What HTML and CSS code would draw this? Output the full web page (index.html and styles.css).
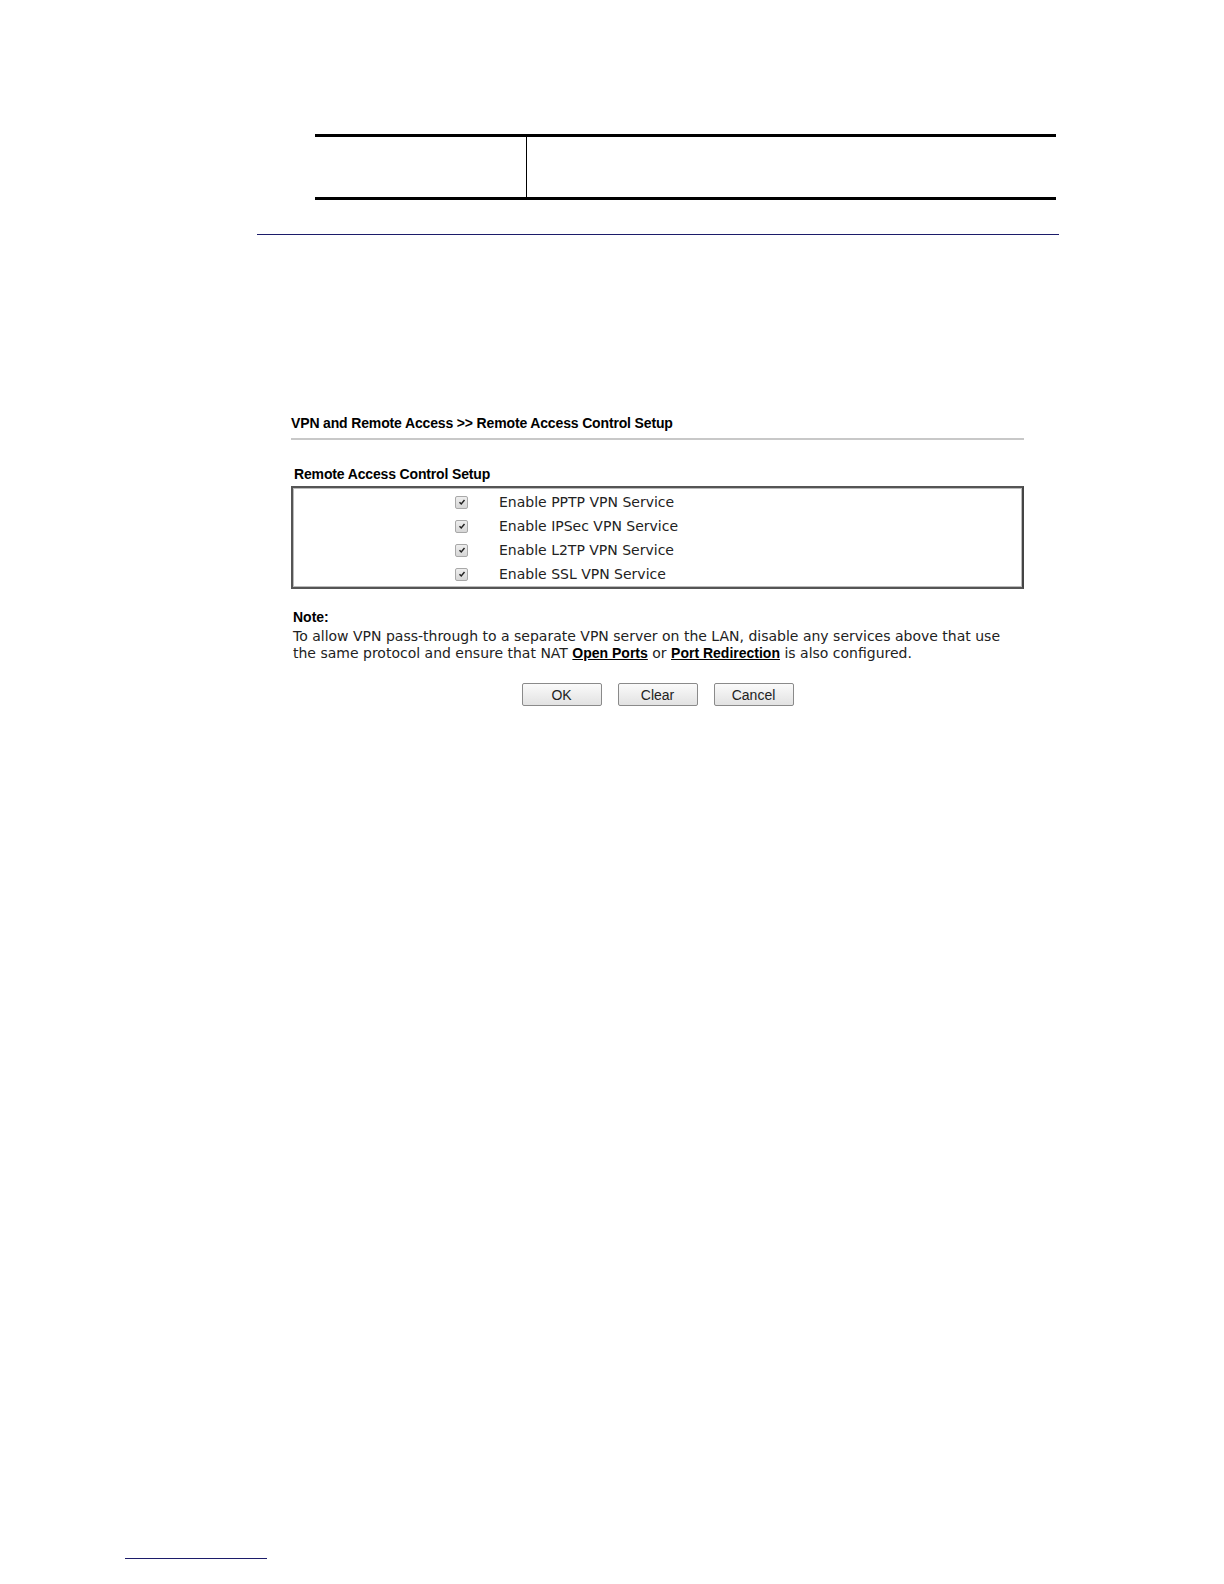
FILE: index.html
```html
<!DOCTYPE html>
<html>
<head>
<meta charset="utf-8">
<link rel="stylesheet" href="styles.css">
</head>
<body>
<div class="page">
  <div class="top-table">
    <div class="cell-left"></div>
    <div class="cell-right"></div>
  </div>
  <div class="section-rule"></div>

  <div class="panel">
    <div class="panel-title">VPN and Remote Access &gt;&gt; Remote Access Control Setup</div>
    <div class="panel-sub">Remote Access Control Setup</div>
    <div class="opt-box">
      <div class="opt-row"><span class="cb"><svg viewBox="0 0 12 12" width="12" height="12"><path d="M3 6.2 L5.1 8.4 L9 3.6" fill="none" stroke="#222" stroke-width="1.7"/></svg></span><span class="opt-label">Enable PPTP VPN Service</span></div>
      <div class="opt-row"><span class="cb"><svg viewBox="0 0 12 12" width="12" height="12"><path d="M3 6.2 L5.1 8.4 L9 3.6" fill="none" stroke="#222" stroke-width="1.7"/></svg></span><span class="opt-label">Enable IPSec VPN Service</span></div>
      <div class="opt-row"><span class="cb"><svg viewBox="0 0 12 12" width="12" height="12"><path d="M3 6.2 L5.1 8.4 L9 3.6" fill="none" stroke="#222" stroke-width="1.7"/></svg></span><span class="opt-label">Enable L2TP VPN Service</span></div>
      <div class="opt-row"><span class="cb"><svg viewBox="0 0 12 12" width="12" height="12"><path d="M3 6.2 L5.1 8.4 L9 3.6" fill="none" stroke="#222" stroke-width="1.7"/></svg></span><span class="opt-label">Enable SSL VPN Service</span></div>
    </div>
    <div class="note">
      <div class="note-title">Note:</div>
      <div class="note-text">To allow VPN pass-through to a separate VPN server on the LAN, disable any services above that use the same protocol and ensure that NAT <a class="lnk">Open Ports</a> or <a class="lnk">Port Redirection</a> is also configured.</div>
    </div>
    <div class="buttons">
      <button class="btn">OK</button>
      <button class="btn">Clear</button>
      <button class="btn">Cancel</button>
    </div>
  </div>

  <div class="foot-rule"></div>
</div>
</body>
</html>
```

FILE: styles.css
```css
html, body {
  margin: 0;
  padding: 0;
  background: #fff;
}
.page {
  width: 1224px;
  height: 1584px;
  position: relative;
  overflow: hidden;
  font-family: "Liberation Sans", Arial, sans-serif;
  color: #000;
}
.top-table {
  display: flex;
  margin-left: 315px;
  margin-top: 134px;
  width: 741px;
  height: 60px;
  border-top: 3px solid #000;
  border-bottom: 3px solid #000;
}
.cell-left {
  width: 211px;
  border-right: 1px solid #000;
}
.cell-right {
  flex: 1;
}
.section-rule {
  margin-left: 257px;
  margin-top: 34px;
  width: 802px;
  border-top: 1px solid #1c1c6a;
}
.panel {
  margin-left: 291px;
  margin-top: 180px;
  width: 733px;
}
.panel-title {
  font-weight: bold;
  font-size: 14px;
  line-height: 17px;
  padding-bottom: 6px;
  border-bottom: 2px solid #c8c8c8;
  letter-spacing: -0.15px;
}
.panel-sub {
  font-weight: bold;
  font-size: 14px;
  line-height: 17px;
  margin-top: 26px;
  padding-left: 3px;
  letter-spacing: -0.15px;
}
.opt-box {
  margin-top: 3px;
  border: 2px solid #555;
  border-right-color: #444;
  box-shadow: inset 1px 1px 0 #bbb, inset -1px -1px 0 #bbb;
  padding: 2px 0 1px 0;
}
.opt-row {
  display: flex;
  align-items: center;
  height: 24px;
}
.cb {
  display: inline-flex;
  width: 11px;
  height: 11px;
  margin-left: 162px;
  border: 1px solid #a8a8a8;
  border-radius: 2px;
  background: linear-gradient(#eeeeee, #d6d6d6);
  align-items: center;
  justify-content: center;
}
.cb svg {
  width: 10px;
  height: 10px;
}
.opt-label {
  margin-left: 31px;
  font-family: "DejaVu Sans", Verdana, sans-serif;
  font-size: 14px;
  color: #222;
}
.note {
  margin-top: 20px;
  padding-left: 2px;
}
.note-title {
  font-weight: bold;
  font-size: 14px;
  line-height: 17px;
}
.note-text {
  font-family: "DejaVu Sans", Verdana, sans-serif;
  font-size: 14px;
  line-height: 17px;
  margin-top: 2px;
  color: #222;
}
.lnk {
  display: inline-block;
  font-family: "Liberation Sans", Arial, sans-serif;
  font-weight: bold;
  font-size: 14px;
  line-height: 15px;
  color: #000;
  text-decoration: underline;
}
.buttons {
  display: flex;
  justify-content: center;
  gap: 16px;
  margin-top: 21px;
}
.btn {
  width: 80px;
  height: 23px;
  padding: 0;
  font-family: "Liberation Sans", Arial, sans-serif;
  font-size: 14px;
  color: #222;
  border: 1px solid #8a8a8a;
  border-radius: 2px;
  background: linear-gradient(#fafafa, #e2e2e2);
}
.foot-rule {
  position: absolute;
  left: 125px;
  top: 1558px;
  width: 142px;
  border-top: 1px solid #1c1c6a;
}
```
